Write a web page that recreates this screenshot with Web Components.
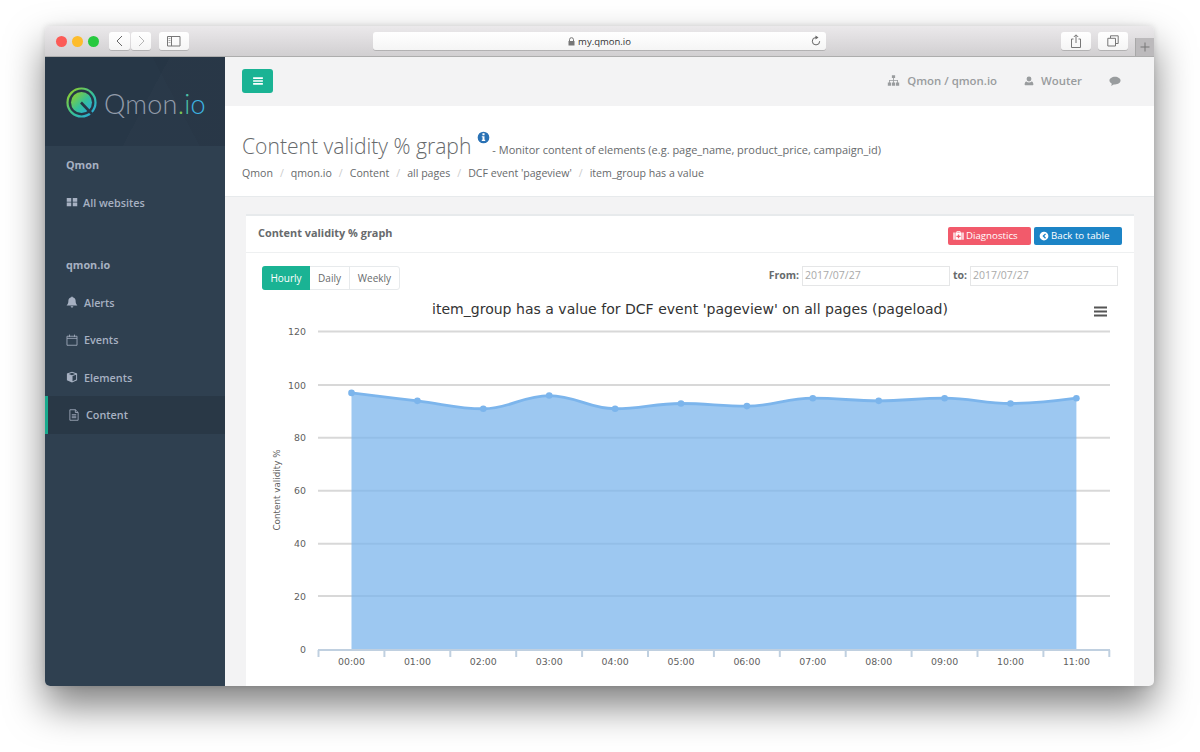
<!DOCTYPE html>
<html>
<head>
<meta charset="utf-8">
<title>Qmon</title>
<style>
  html, body { margin: 0; background: #fff; }
  body { padding: 26px 45px; height: 752px; box-sizing: border-box; overflow: hidden; font-family: "Open Sans", "Liberation Sans", sans-serif; }
</style>
</head>
<body>
<mac-window>
  <mac-toolbar slot="toolbar" url="my.qmon.io"></mac-toolbar>
  <qm-sidebar slot="side">
    <qm-nav label>Qmon</qm-nav>
    <qm-nav icon="th" space="5">All websites</qm-nav>
    <qm-nav label gap>qmon.io</qm-nav>
    <qm-nav icon="bell">Alerts</qm-nav>
    <qm-nav icon="calendar">Events</qm-nav>
    <qm-nav icon="cube">Elements</qm-nav>
    <qm-nav icon="file" active>Content</qm-nav>
  </qm-sidebar>
  <qm-topbar></qm-topbar>
  <qm-heading></qm-heading>
  <qm-card title="Content validity % graph">
    <qm-controls></qm-controls>
    <qm-chart></qm-chart>
  </qm-card>
</mac-window>

<script>
// small filled / outlined glyphs, all on a 16x16 box
const ICONS = {
  th: '<path fill="currentColor" d="M1 2.500h6v5H1zM9 2.500h6v5H9zM1 8.800h6v5H1zM9 8.800h6v5H9z"/>',
  bell: '<path fill="currentColor" d="M8 .6c.6 0 1 .4 1 .9 2.400.4 3.800 2.300 3.800 4.600 0 3.400.8 5 2.400 6.400H.8c1.600-1.400 2.400-3 2.400-6.400C3.200 3.800 4.600 1.900 7 1.500 7 1 7.400.6 8 .6zM6.200 13.500h3.600C9.700 14.600 8.900 15.300 8 15.300s-1.700-.7-1.800-1.800z"/>',
  calendar: '<path fill="none" stroke="currentColor" stroke-width="1.100" d="M1.300 3h13.400v12H1.300zM1.300 5.800h13.400M4.700 .8v3M11.300 .8v3"/>',
  cube: '<path fill="currentColor" d="M8 1l6.800 2.400v8.800L8 15.200l-6.800-3V3.400zM8 2.400L3.600 4 8 5.600 12.400 4zM8.700 6.800v6.700l4.800-2.100V5.100z"/><path fill="currentColor" opacity=".6" d="M2.500 5.100v6.300l4.800 2.100V6.800z"/>',
  file: '<path fill="none" stroke="currentColor" stroke-width="1.100" d="M2.500 1h7.300l3.700 3.700v10.300h-11zM9.800 1v3.700h3.700M5 7.600h6M5 9.600h6M5 11.600h6"/>',
  sitemap: '<path fill="currentColor" d="M6 1.500h4v3.500H6zM1 10.500h4V14.500H1zM6 10.500h4V14.500H6zM11 10.500h4V14.500h-4zM7.500 5h1v2.400h5v3.100h-1V8.400h-4v2.100h-1V8.400h-4v2.100h-1V7.400h5z"/>',
  user: '<circle fill="currentColor" cx="8" cy="4.800" r="3.900"/><path fill="currentColor" d="M1.800 14.800c-.4 0-.8-.3-.8-.8 0-3 .9-5 2.900-5.300C5 9.700 6.400 10.200 8 10.200s3-.5 4.100-1.500c2 .3 2.900 2.300 2.900 5.300 0 .5-.4.8-.8.8z"/>',
  comment: '<path fill="currentColor" d="M8 2.200c4.100 0 7.400 2.300 7.400 5.200S12.100 12.600 8 12.600c-.6 0-1.200 0-1.700-.1-.9.900-2.300 1.500-3.800 1.800.7-.8 1.200-1.700 1.300-2.700C1.900 10.700.6 9.200.6 7.400c0-2.900 3.300-5.200 7.400-5.200z"/>',
  medkit: '<path fill="currentColor" fill-rule="evenodd" d="M5 3.500V2.800C5 2 5.600 1.500 6.300 1.500h3.400c.7 0 1.300.5 1.300 1.300v.7h1.500v10.500H3.500V3.500zM6.200 3.500h3.600V2.700H6.200zM7 6.500v2H5V10h2v2h2v-2h2V8.500H9v-2zM0.500 3.500h2v10.500h-2zM13.500 3.500h2v10.500h-2z"/>',
  back: '<path fill="currentColor" fill-rule="evenodd" d="M8 1a7 7 0 1 1 0 14A7 7 0 0 1 8 1zM9.700 3.800L5.500 8l4.200 4.200 1.500-1.500L8.500 8l2.700-2.700z"/>',
  info: '<path fill="currentColor" fill-rule="evenodd" d="M8 .8a7.200 7.200 0 1 1 0 14.400A7.200 7.200 0 0 1 8 .8zM6.700 2.900v2.300h2.600V2.900zM5.900 6.400v1.400h.9v3.100h-.9v1.500h4.200v-1.500h-.9V6.400z"/>',
  bars: '<path fill="currentColor" d="M1.500 3h13v2.200h-13zM1.500 6.900h13v2.200h-13zM1.500 10.800h13V13h-13z"/>'
};

class QmIcon extends HTMLElement {
  connectedCallback() {
    const size = this.getAttribute('size') || 12;
    this.attachShadow({ mode: 'open' }).innerHTML = `<style>:host{display:inline-flex;flex:none}svg{display:block}</style>
      <svg width="${size}" height="${size}" viewBox="0 0 16 16">${ICONS[this.getAttribute('name')] || ''}</svg>`;
  }
}
customElements.define('qm-icon', QmIcon);

class MacWindow extends HTMLElement {
  connectedCallback() {
    this.attachShadow({ mode: 'open' }).innerHTML = `<style>
      :host { display: flex; flex-direction: column; width: 1109px; height: 660px; border-radius: 5px; overflow: hidden;
              box-shadow: 0 20px 38px rgba(0,0,0,.5), 0 0 6px rgba(0,0,0,.12); background: #f3f3f4; }
      .body { flex: 1; display: flex; min-height: 0; }
      .main { flex: 1; min-width: 0; display: flex; flex-direction: column; overflow: hidden; }
    </style>
    <slot name="toolbar"></slot>
    <div class="body"><slot name="side"></slot><div class="main"><slot></slot></div></div>`;
  }
}
customElements.define('mac-window', MacWindow);

class MacToolbar extends HTMLElement {
  connectedCallback() {
    const url = this.getAttribute('url');
    this.attachShadow({ mode: 'open' }).innerHTML = `<style>
      :host { display: flex; align-items: center; flex: none; height: 30px; padding-left: 11px; box-sizing: content-box;
              background: linear-gradient(#ebe9eb, #d1cfd1); border-bottom: 1px solid #adadad; font-family: "Open Sans", sans-serif; }
      .dot { width: 11px; height: 11px; border-radius: 50%; margin-right: 5px; }
      .b { height: 18px; background: linear-gradient(#fff, #f5f5f5); border-radius: 3px; box-shadow: 0 1px 0 rgba(0,0,0,.16);
           display: flex; align-items: center; justify-content: center; color: #555; }
      .nav { display: flex; gap: 1px; margin-left: 10px; }
      .addr { width: 453px; margin-left: 184px; position: relative; font-size: 9.500px; color: #333; gap: 3px; }
      .addr .reload { position: absolute; right: 4px; top: 3px; }
      .plus { width: 19px; height: 18px; margin-left: 7px; align-self: flex-end; background: #bcbabc; color: #666;
              border-left: 1px solid #a8a8a8; box-sizing: border-box; display: flex; align-items: center; justify-content: center; }
      svg { display: block; }
    </style>
    <span class="dot" style="background:#fc5b57"></span>
    <span class="dot" style="background:#fdbc2c"></span>
    <span class="dot" style="background:#27c93f;margin-right:0"></span>
    <div class="nav">
      <div class="b" style="width:21px"><svg width="9" height="12" viewBox="0 0 9 12"><path d="M7 1L2 6l5 5" fill="none" stroke="#666"/></svg></div>
      <div class="b" style="width:20px"><svg width="9" height="12" viewBox="0 0 9 12"><path d="M2 1l5 5-5 5" fill="none" stroke="#b5b5b5"/></svg></div>
    </div>
    <div class="b" style="width:30px;margin-left:8px"><svg width="14" height="11" viewBox="0 0 14 11"><path d="M.5.500h12.500v9.500H.5zM4.500.500v9.500" fill="none" stroke="#777"/><path d="M1.500 2.500h2M1.500 4.500h2M1.500 6.500h2" stroke="#aaa"/></svg></div>
    <div class="b addr">
      <svg width="7" height="9" viewBox="0 0 7 9"><path d="M1.500 4V2.700a2 2 0 0 1 4 0V4" fill="none" stroke="#777"/><path d="M.5 4h6v4.500h-6z" fill="#777"/></svg>
      <span>${url}</span>
      <svg class="reload" width="12" height="12" viewBox="0 0 12 12"><path d="M6 2.500a3.700 3.700 0 1 0 3.700 3.700" fill="none" stroke="#666"/><path d="M5.500.500l3 2-3 2z" fill="#666"/></svg>
    </div>
    <div class="b" style="width:30px;margin-left:235px"><svg width="12" height="14" viewBox="0 0 12 14"><path d="M3.500 5H1.500v8.500h9V5H8.500M6 9V1M3.800 3L6 .8 8.200 3" fill="none" stroke="#777"/></svg></div>
    <div class="b" style="width:30px;margin-left:7px"><svg width="12" height="12" viewBox="0 0 12 12"><path d="M3.500 3V.800h7.700v7.700H8.500M.8 3.300h7.700V11H.8z" fill="none" stroke="#777"/></svg></div>
    <div class="plus"><svg width="10" height="10" viewBox="0 0 10 10"><path d="M5 .5v9M.5 5h9" stroke="#777"/></svg></div>`;
  }
}
customElements.define('mac-toolbar', MacToolbar);

class QmSidebar extends HTMLElement {
  connectedCallback() {
    this.attachShadow({ mode: 'open' }).innerHTML = `<style>
      :host { display: block; flex: none; width: 180px; background: #2f4050; }
      .logo { height: 89px; background: #273747; position: relative; overflow: hidden; display: flex; align-items: center; padding: 3px 0 0 21px; box-sizing: border-box; gap: 6px; }
      .logo::before { content: ""; position: absolute; inset: 0; background:
          linear-gradient(118deg, transparent 55%, rgba(255,255,255,.012) 55%), linear-gradient(62deg, transparent 68%, rgba(0,0,0,.03) 68%); }
      .logo > * { position: relative; }
      svg { display: block; flex: none; }
      .word { font: 300 27px/1 Lato, "Open Sans", sans-serif; color: #929cab; letter-spacing: .25px; white-space: nowrap; }
      .d { color: #7cc552; } .i { color: #4cc0a8; } .o { color: #3db4e2; }
    </style>
    <div class="logo">
      <svg width="32" height="32" viewBox="0 0 32 32">
        <defs>
          <linearGradient id="g" x1="0" y1="0" x2="1" y2="1"><stop offset="0" stop-color="#9bd01e"/><stop offset=".55" stop-color="#35c09a"/><stop offset="1" stop-color="#2aa8e6"/></linearGradient>
        </defs>
        <circle cx="15.500" cy="15.500" r="14" fill="none" stroke="url(#g)" stroke-width="2.200"/>
        <circle cx="15.500" cy="15.500" r="10.500" fill="url(#g)"/>
        <path d="M15 15.500L26 27" stroke="#273747" stroke-width="2.600" fill="none"/>
      </svg>
      <span class="word">Qmon<span class="d">.</span><span class="i">i</span><span class="o">o</span></span>
    </div>
    <slot></slot>`;
  }
}
customElements.define('qm-sidebar', QmSidebar);

class QmNav extends HTMLElement {
  connectedCallback() {
    const icon = this.getAttribute('icon');
    const space = this.getAttribute('space') || 6;
    this.attachShadow({ mode: 'open' }).innerHTML = `<style>
      :host { display: flex; align-items: center; height: 37.500px; padding-left: 21px; gap: ${space}px; box-sizing: border-box;
              font: 600 10.800px "Open Sans", sans-serif; color: #a7b1c2; }
      :host([gap]) { margin-top: 25px; }
      :host([label]) { font-weight: 700; }
      :host([active]) { background: #293846; border-left: 3px solid #19aa8d; padding-left: 20px; }
    </style>
    ${icon ? `<qm-icon name="${icon}" size="12"></qm-icon>` : ''}<slot></slot>`;
  }
}
customElements.define('qm-nav', QmNav);

class QmTopbar extends HTMLElement {
  connectedCallback() {
    this.attachShadow({ mode: 'open' }).innerHTML = `<style>
      :host { display: flex; align-items: center; flex: none; height: 49px; box-sizing: border-box; padding: 0 33px 2px 17px; background: #f3f3f4;
              font: 600 11.400px "Open Sans", sans-serif; color: #999c9e; }
      .menu { width: 31px; height: 24px; border-radius: 3px; background: #1ab394; color: #fff; display: flex; align-items: center; justify-content: center; }
      .r { margin-left: auto; display: flex; align-items: center; }
      .i { display: flex; align-items: center; }
    </style>
    <div class="menu"><qm-icon name="bars" size="12"></qm-icon></div>
    <div class="r">
      <span class="i" style="gap:7px"><qm-icon name="sitemap" size="13"></qm-icon>Qmon / qmon.io</span>
      <span class="i" style="margin-left:27px;gap:7px"><qm-icon name="user" size="10"></qm-icon>Wouter</span>
      <span class="i" style="margin-left:27px"><qm-icon name="comment" size="12"></qm-icon></span>
    </div>`;
  }
}
customElements.define('qm-topbar', QmTopbar);

class QmHeading extends HTMLElement {
  connectedCallback() {
    const crumbs = ['Qmon', 'qmon.io', 'Content', 'all pages', "DCF event 'pageview'", 'item_group has a value'];
    this.attachShadow({ mode: 'open' }).innerHTML = `<style>
      :host { display: block; flex: none; height: 91px; box-sizing: border-box; padding: 25px 17px 0; background: #fff; border-bottom: 1px solid #e7eaec;
              font-family: "Open Sans", sans-serif; color: #676a6c; }
      .t { display: flex; align-items: baseline; height: 30px; white-space: nowrap; }
      h2 { margin: 0; font-size: 21.100px; font-weight: 300; line-height: 30px; }
      .info { color: #2a72b5; align-self: flex-start; margin: 0 1px 0 6px; }
      small { font-size: 11px; margin-left: 1px; }
      ol { list-style: none; display: flex; margin: 3px 0 0; padding: 0; font-size: 10.600px; line-height: 18px; }
      li + li::before { content: "/"; color: #ccc; padding: 0 7px; }
    </style>
    <div class="t"><h2>Content validity % graph</h2><qm-icon class="info" name="info" size="13"></qm-icon><small>- Monitor content of elements (e.g. page_name, product_price, campaign_id)</small></div>
    <ol>${crumbs.map(c => `<li>${c}</li>`).join('')}</ol>`;
  }
}
customElements.define('qm-heading', QmHeading);

class QmCard extends HTMLElement {
  connectedCallback() {
    this.attachShadow({ mode: 'open' }).innerHTML = `<style>
      :host { display: block; margin: 17px 20px 0 21px; background: #fff; border-top: 2px solid #e7eaec; font-family: "Open Sans", sans-serif; color: #676a6c; }
      header { display: flex; align-items: center; height: 36px; padding: 0 12px; border-bottom: 1px solid #eef0f1; }
      h5 { margin: -3px 0 0; font-size: 10.900px; font-weight: 700; }
      .acts { margin-left: auto; display: flex; gap: 3px; margin-top: 4px; }
      .btn { height: 18px; display: flex; align-items: center; gap: 2px; padding: 0 0 1px 5px; box-sizing: border-box; border-radius: 2px; color: #fff; font-size: 9.700px; }
    </style>
    <header>
      <h5>${this.getAttribute('title')}</h5>
      <div class="acts">
        <div class="btn" style="width:83px;background:#f25a6b"><qm-icon name="medkit" size="11"></qm-icon>Diagnostics</div>
        <div class="btn" style="width:88px;background:#1c84c6"><qm-icon name="back" size="10"></qm-icon>Back to table</div>
      </div>
    </header>
    <slot></slot>`;
  }
}
customElements.define('qm-card', QmCard);

class QmControls extends HTMLElement {
  connectedCallback() {
    this.attachShadow({ mode: 'open' }).innerHTML = `<style>
      :host { display: flex; align-items: flex-start; padding: 13px 16px 0; height: 26px; font: 10px "Open Sans", sans-serif; color: #676a6c; }
      .tabs { display: flex; height: 24px; border: 1px solid #e7eaec; border-radius: 3px; box-sizing: border-box; }
      .tabs span { display: flex; align-items: center; justify-content: center; padding-bottom: 1px; box-sizing: border-box; }
      .on { background: #1ab394; color: #fff; margin: -1px 0 -1px -1px; border-radius: 3px 0 0 3px; }
      .r { margin-left: auto; display: flex; align-items: center; height: 20px; font-weight: 700; font-size: 10.500px; line-height: 17px; }
      .f { width: 148px; height: 20px; box-sizing: border-box; border: 1px solid #e5e6e7; color: #a9a9a9; font-weight: 400; padding-left: 2px; line-height: 17px; font-size: 10.500px; }
    </style>
    <div class="tabs">
      <span class="on" style="width:48px">Hourly</span>
      <span style="width:40px;border-right:1px solid #e7eaec">Daily</span>
      <span style="width:49px">Weekly</span>
    </div>
    <div class="r"><span style="margin-top:-2px">From:</span><span class="f" style="margin-left:3px">2017/07/27</span><span style="margin:-2px 0 0 3px;width:17px">to:</span><span class="f">2017/07/27</span></div>`;
  }
}
customElements.define('qm-controls', QmControls);

class QmChart extends HTMLElement {
  connectedCallback() {
    const vals = [97, 94, 91, 96, 91, 93, 92, 95, 94, 95, 93, 95];
    const y = v => 649 - v * 2.64;
    const x = i => 351.5 + i * 65.9;
    const pts = vals.map((v, i) => [x(i), y(v)]);

    // same spline the chart library uses: smoothing 1.5, collinear handles
    const handles = pts.map((p, i) => {
      const a = pts[i - 1], b = pts[i + 1];
      if (!a || !b) return [p, p];
      let lx = (1.5 * p[0] + a[0]) / 2.5, ly = (1.5 * p[1] + a[1]) / 2.5;
      let rx = (1.5 * p[0] + b[0]) / 2.5, ry = (1.5 * p[1] + b[1]) / 2.5;
      const c = ((ry - ly) * (rx - p[0])) / (rx - lx) + p[1] - ry;
      ly += c; ry += c;
      if (ly > a[1] && ly > p[1]) { ly = Math.max(a[1], p[1]); ry = 2 * p[1] - ly; }
      else if (ly < a[1] && ly < p[1]) { ly = Math.min(a[1], p[1]); ry = 2 * p[1] - ly; }
      if (ry > b[1] && ry > p[1]) { ry = Math.max(b[1], p[1]); ly = 2 * p[1] - ry; }
      else if (ry < b[1] && ry < p[1]) { ry = Math.min(b[1], p[1]); ly = 2 * p[1] - ry; }
      return [[lx, ly], [rx, ry]];
    });
    let line = `M${pts[0][0]} ${pts[0][1]}`;
    for (let i = 1; i < pts.length; i++) {
      line += `C${handles[i - 1][1].join(' ')} ${handles[i][0].join(' ')} ${pts[i].join(' ')}`;
    }
    const area = `${line}L${x(11)} 649L${x(0)} 649Z`;

    let grid = '', labels = '', ticks = '', hours = '';
    [0, 20, 40, 60, 80, 100, 120].forEach(v => {
      const yy = [649.5, 596, 543.7, 490.7, 437.7, 385, 331.5][v / 20];
      if (v) grid += `<path d="M318 ${yy}H1110" stroke="#d8d8d8" stroke-width="2"/>`;
      labels += `<text x="306" y="${yy + 3.500}" text-anchor="end">${v}</text>`;
    });
    for (let i = 0; i <= 12; i++) ticks += `<path d="M${318.5 + i * 65.9} 650v7" stroke="#c0d0e0" stroke-width="2"/>`;
    for (let i = 0; i < 12; i++) hours += `<text x="${x(i)}" y="664.500" text-anchor="middle">${String(i).padStart(2, '0')}:00</text>`;

    // viewBox starts at this element's place in the window, so coordinates read as page pixels
    this.attachShadow({ mode: 'open' }).innerHTML = `<style>
      :host { display: block; height: 394px; }
      svg { display: block; font-family: "DejaVu Sans", sans-serif; }
      .lab text { font-size: 9.400px; fill: #606060; }
      .rot { font-size: 8.800px; fill: #606060; }
      .title { font-size: 14.050px; fill: #333; }
    </style>
    <svg width="888" height="394" viewBox="246 292 888 394">
      <text class="title" x="690" y="313.500" text-anchor="middle">item_group has a value for DCF event 'pageview' on all pages (pageload)</text>
      <path d="M1094 307.500h13M1094 311.500h13M1094 315.500h13" stroke="#555" stroke-width="2.200"/>
      ${grid}
      <path d="M318 650H1110" stroke="#c0d0e0" stroke-width="2"/>
      ${ticks}
      <path d="${area}" fill="#7cb5ec" fill-opacity=".75"/>
      <path d="${line}" fill="none" stroke="#7cb5ec" stroke-width="2.800"/>
      ${pts.map(p => `<circle cx="${p[0]}" cy="${p[1]}" r="3.300" fill="#7cb5ec"/>`).join('')}
      <g class="lab">${labels}${hours}</g>
      <text class="rot" transform="translate(280 490) rotate(-90)" text-anchor="middle">Content validity %</text>
    </svg>`;
  }
}
customElements.define('qm-chart', QmChart);
</script>
</body>
</html>
